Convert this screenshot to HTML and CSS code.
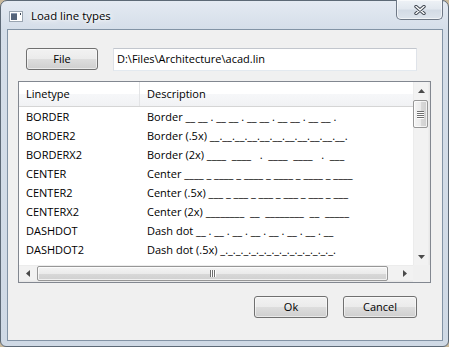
FILE: index.html
```html
<!DOCTYPE html>
<html>
<head>
<meta charset="utf-8">
<link rel="stylesheet" href="styles.css">
</head>
<body>
<div class="window">
  <div class="titlebar">
    <svg class="appicon" width="14" height="11" viewBox="0 0 14 11">
      <rect x="0.5" y="0.5" width="13" height="10" fill="#ffffff" stroke="#9aa5b1"/>
      <rect x="2" y="3" width="6" height="6" fill="#55647a"/>
      <rect x="2" y="2" width="6" height="1" fill="#8c9ab0"/>
      <rect x="11" y="2" width="1" height="2" fill="#3a4658"/>
    </svg>
    <span class="title">Load line types</span>
    <div class="close">
      <svg width="12" height="10" viewBox="0 0 12 10">
        <path d="M2 1.5 L10 8.5 M10 1.5 L2 8.5" stroke="#3f4650" stroke-width="3.4" stroke-linecap="round" fill="none"/>
        <path d="M2 1.5 L10 8.5 M10 1.5 L2 8.5" stroke="#ffffff" stroke-width="1.5" stroke-linecap="round" fill="none"/>
      </svg>
    </div>
  </div>
  <div class="client">
    <div class="toolbar">
      <button class="btn file">File</button>
      <div class="path">D:\Files\Architecture\acad.lin</div>
    </div>
    <div class="list">
      <div class="view">
        <div class="header"><div class="c1">Linetype</div><div class="c2">Description</div></div>
        <div class="row"><div class="c1">BORDER</div><div class="c2">Border __ __ . __ __ . __ __ . __ __ . __ __ .</div></div>
        <div class="row"><div class="c1">BORDER2</div><div class="c2">Border (.5x) __.__.__.__.__.__.__.__.__.__.__.</div></div>
        <div class="row"><div class="c1">BORDERX2</div><div class="c2">Border (2x) ____  ____   .  ____  ____   .  ___</div></div>
        <div class="row"><div class="c1">CENTER</div><div class="c2">Center ____ _ ____ _ ____ _ ____ _ ____ _ ____</div></div>
        <div class="row"><div class="c1">CENTER2</div><div class="c2">Center (.5x) ___ _ ___ _ ___ _ ___ _ ___ _ ___</div></div>
        <div class="row"><div class="c1">CENTERX2</div><div class="c2">Center (2x) ________  __  ________  __  _____</div></div>
        <div class="row"><div class="c1">DASHDOT</div><div class="c2">Dash dot __ . __ . __ . __ . __ . __ . __ . __</div></div>
        <div class="row"><div class="c1">DASHDOT2</div><div class="c2">Dash dot (.5x) _._._._._._._._._._._._._._._.</div></div>
        <div class="row"><div class="c1">DASHDOTX2</div><div class="c2">Dash dot (2x) ____  .  ____  .  ____  .  ___</div></div>
      </div>
      <div class="vscroll">
        <div class="arrow"><svg width="7" height="4" viewBox="0 0 7 4"><path d="M0 4 L3.5 0 L7 4 Z" fill="#4b4b4b"/></svg></div>
        <div class="vthumb"><span class="grip"></span><span class="grip"></span><span class="grip"></span><span class="grip"></span></div>
        <div class="track"></div>
        <div class="arrow"><svg width="7" height="4" viewBox="0 0 7 4"><path d="M0 0 L7 0 L3.5 4 Z" fill="#4b4b4b"/></svg></div>
      </div>
      <div class="hscroll">
        <div class="arrow"><svg width="4" height="7" viewBox="0 0 4 7"><path d="M4 0 L4 7 L0 3.5 Z" fill="#4b4b4b"/></svg></div>
        <div class="hthumb"><span class="hgrip"></span><span class="hgrip"></span><span class="hgrip"></span></div>
        <div class="track"></div>
        <div class="arrow"><svg width="4" height="7" viewBox="0 0 4 7"><path d="M0 0 L4 3.5 L0 7 Z" fill="#4b4b4b"/></svg></div>
      </div>
      <div class="corner"></div>
    </div>
    <div class="footer">
      <button class="btn">Ok</button>
      <button class="btn">Cancel</button>
    </div>
  </div>
</div>
</body>
</html>
```
FILE: styles.css
```css
html, body {
  margin: 0;
  padding: 0;
  background: #c9b99c;
}
body {
  font-family: "Open Sans", "Noto Sans", sans-serif;
  font-size: 11px;
  color: #000;
}
.window {
  box-sizing: border-box;
  width: 449px;
  height: 347px;
  border: 1px solid #5d6976;
  border-radius: 7px 7px 6px 6px;
  background: linear-gradient(to bottom, #e4eaf2 0, #d5dee9 28px, #cfd9e5 100%);
  padding: 0 5px 5px 6px;
  display: flex;
  flex-direction: column;
}
.titlebar {
  height: 28px;
  display: flex;
  align-items: center;
  flex: none;
}
.appicon {
  margin-left: 2px;
  margin-top: 2px;
  flex: none;
}
.title {
  margin-left: 8px;
  margin-top: 1px;
  font-size: 11.4px;
  color: #000;
  text-shadow: 0 0 6px #ffffff, 0 0 10px #ffffff, 0 0 3px #ffffff;
}
.close {
  margin-left: auto;
  align-self: flex-start;
  margin-top: -1px;
  width: 47px;
  height: 20px;
  box-sizing: border-box;
  border: 1px solid #6e7886;
  border-top: none;
  border-radius: 0 0 5px 5px;
  background: linear-gradient(to bottom, #eef2f6 0, #e2e8ef 45%, #d3dbe5 55%, #dde4ec 100%);
  box-shadow: inset 0 0 0 1px rgba(255, 255, 255, 0.6);
  display: flex;
  align-items: center;
  justify-content: center;
}
.client {
  flex: 1;
  background: #f0f0f0;
  border: 1px solid #8293a5;
  display: flex;
  flex-direction: column;
}
.toolbar {
  display: flex;
  align-items: flex-start;
  gap: 15px;
  margin: 18px 25px 0 18px;
}
.btn {
  box-sizing: border-box;
  width: 74px;
  height: 22px;
  border: 1px solid #707070;
  border-radius: 3px;
  background: linear-gradient(to bottom, #f2f2f2 0, #ebebeb 50%, #dddddd 51%, #cfcfcf 100%);
  box-shadow: inset 0 0 0 1px rgba(255, 255, 255, 0.55);
  font-family: "Open Sans", "Noto Sans", sans-serif;
  font-size: 11px;
  color: #000;
  padding: 0;
  line-height: 18px;
}
.btn.file {
  width: 72px;
  flex: none;
}
.path {
  flex: 1;
  box-sizing: border-box;
  height: 23px;
  background: #ffffff;
  border: 1px solid;
  border-color: #c2c6cd #dfe3e9 #e3e9ef #dde1e7;
  padding: 0 3px;
  line-height: 20px;
}
.list {
  margin: 10px 11px 0 10px;
  height: 202px;
  box-sizing: border-box;
  border: 1px solid #828790;
  background: #ffffff;
  display: grid;
  grid-template-columns: 1fr 17px;
  grid-template-rows: 1fr 17px;
}
.view {
  overflow: hidden;
  grid-column: 1;
  grid-row: 1;
}
.header {
  display: flex;
  height: 24px;
  border-bottom: 1px solid #d5d5d5;
  background: linear-gradient(to bottom, #ffffff 0, #ffffff 50%, #f6f7f9 51%, #f1f2f4 100%);
  line-height: 24px;
}
.header .c1 {
  border-right: 1px solid #e3e4e6;
  width: 113px;
}
.row {
  display: flex;
  height: 19px;
  line-height: 19px;
}
.c1 {
  width: 114px;
  padding-left: 7px;
  flex: none;
  white-space: nowrap;
}
.c2 {
  padding-left: 7px;
  white-space: pre;
}
.vscroll {
  grid-column: 2;
  grid-row: 1;
  display: flex;
  flex-direction: column;
  background: linear-gradient(to right, #e6e6e6 0, #f2f2f2 1px, #f2f2f2 15px, #e8e8e8 16px);
}
.arrow {
  width: 17px;
  height: 17px;
  flex: none;
  display: flex;
  align-items: center;
  justify-content: center;
}
.track {
  flex: 1;
}
.vthumb {
  box-sizing: border-box;
  width: 15px;
  height: 28px;
  margin: 1px 1px 0 0;
  border: 1px solid #979797;
  border-radius: 2px;
  background: linear-gradient(to right, #f4f4f4 0, #ebebeb 50%, #d9d9d9 51%, #d0d0d0 100%);
  box-shadow: inset 0 0 0 1px rgba(255, 255, 255, 0.7);
  display: flex;
  flex-direction: column;
  align-items: center;
  justify-content: center;
  gap: 1px;
}
.grip {
  width: 7px;
  height: 1px;
  background: #6f6f6f;
  box-shadow: 0 1px 0 #ffffff;
}
.hscroll {
  grid-column: 1;
  grid-row: 2;
  display: flex;
  background: linear-gradient(to bottom, #e6e6e6 0, #f2f2f2 1px, #f2f2f2 15px, #e8e8e8 16px);
}
.hthumb {
  box-sizing: border-box;
  width: 351px;
  height: 15px;
  margin: 1px 0 0 1px;
  border: 1px solid #979797;
  border-radius: 2px;
  background: linear-gradient(to bottom, #f4f4f4 0, #ebebeb 50%, #d9d9d9 51%, #d0d0d0 100%);
  box-shadow: inset 0 0 0 1px rgba(255, 255, 255, 0.7);
  display: flex;
  align-items: center;
  justify-content: center;
  gap: 1px;
}
.hgrip {
  width: 1px;
  height: 7px;
  background: #6f6f6f;
  box-shadow: 1px 0 0 #ffffff;
}
.corner {
  grid-column: 2;
  grid-row: 2;
  background: #f0f0f0;
}
.footer {
  display: flex;
  justify-content: flex-end;
  gap: 15px;
  margin: 13px 25px 0 0;
}
```
